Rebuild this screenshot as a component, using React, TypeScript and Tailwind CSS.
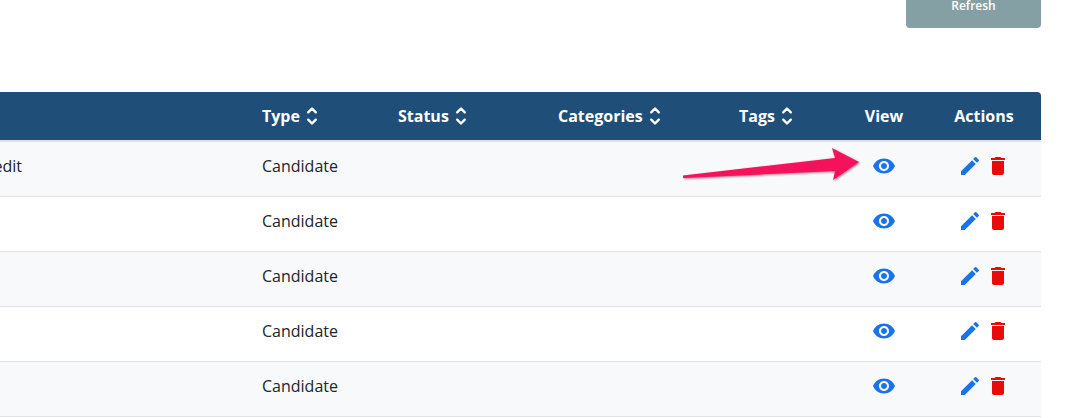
const rows = ["Credit", "", "", "", ""];

const grid = "grid grid-cols-[262px_136px_160px_181px_102px_86px_114px] items-center";

function Sort() {
  return (
    <svg width="12" height="20" viewBox="0 0 12 20" fill="none" stroke="currentColor" strokeWidth="2.4" strokeLinecap="round" strokeLinejoin="round" className="ml-[6px]">
      <path d="M2.2 6.3 6 2.5l3.8 3.8" />
      <path d="M2.2 13.7 6 17.5l3.8-3.8" />
    </svg>
  );
}

function Eye() {
  return (
    <svg width="24" height="24" viewBox="0 0 24 24" fill="#1a73e8">
      <path d="M12 4.5C7 4.5 2.73 7.61 1 12c1.73 4.39 6 7.5 11 7.5s9.27-3.11 11-7.5c-1.73-4.39-6-7.5-11-7.5zM12 17c-2.76 0-5-2.24-5-5s2.24-5 5-5 5 2.24 5 5-2.24 5-5 5zm0-8c-1.66 0-3 1.34-3 3s1.34 3 3 3 3-1.34 3-3-1.34-3-3-3z" />
    </svg>
  );
}

function Pencil() {
  return (
    <svg width="24" height="24" viewBox="0 0 24 24" fill="#1a73e8">
      <path d="M3 17.25V21h3.75L17.81 9.94l-3.75-3.75L3 17.25zM20.71 7.04a1 1 0 0 0 0-1.41l-2.34-2.34a1 1 0 0 0-1.41 0l-1.83 1.83 3.75 3.75 1.83-1.83z" />
    </svg>
  );
}

function Trash() {
  return (
    <svg width="24" height="24" viewBox="0 0 24 24" fill="#ea0a0a">
      <path d="M6 19c0 1.1.9 2 2 2h8c1.1 0 2-.9 2-2V7H6v12zM19 4h-3.5l-1-1h-5l-1 1H5v2h14V4z" />
    </svg>
  );
}

export default function App() {
  return (
    <div className="relative h-[418px] w-[1072px] overflow-hidden bg-white font-['Open_Sans',sans-serif]">
      <div className="flex justify-end pr-[31px]">
        <button className="-mt-[16px] h-[44px] w-[135px] rounded-[4px] bg-[#85a0a5] text-center text-[12px] font-semibold text-white">
          Refresh
        </button>
      </div>

      <div className="mt-[64px] w-[1041px]">
        <div className={`${grid} h-[48px] rounded-tr-[4px] bg-[#1f4e79] text-[16px] font-bold text-white`}>
          <div />
          <div className="flex items-center">Type<Sort /></div>
          <div className="flex items-center">Status<Sort /></div>
          <div className="flex items-center">Categories<Sort /></div>
          <div className="flex items-center">Tags<Sort /></div>
          <div className="text-center">View</div>
          <div className="text-center">Actions</div>
        </div>
        <div className="h-[2px] bg-[#dee2e6]" />
        {rows.map((name, i) => (
          <div
            key={i}
            className={`${grid} h-[55px] border-b border-[#dee2e6] pb-[6px] text-[16px] text-[#212529] ${i % 2 === 0 ? "bg-[#f7f9fb]" : "bg-white"}`}
          >
            <div className="flex justify-end overflow-hidden pr-[240px]">{name}</div>
            <div>Candidate</div>
            <div />
            <div />
            <div />
            <div className="flex justify-center"><Eye /></div>
            <div className="flex justify-center gap-[4px]">
              <Pencil />
              <Trash />
            </div>
          </div>
        ))}
      </div>

      <svg className="absolute left-[680px] top-[145px] drop-shadow-[1px_1px_1px_rgba(120,0,40,0.55)]" width="190" height="40" viewBox="0 0 190 40">
        <path d="M3 30.5 L155 13 L152 3 L179 17 L153 35 L155 26 L3 33 Z" fill="#f5115c" strokeLinejoin="round" />
      </svg>
    </div>
  );
}
